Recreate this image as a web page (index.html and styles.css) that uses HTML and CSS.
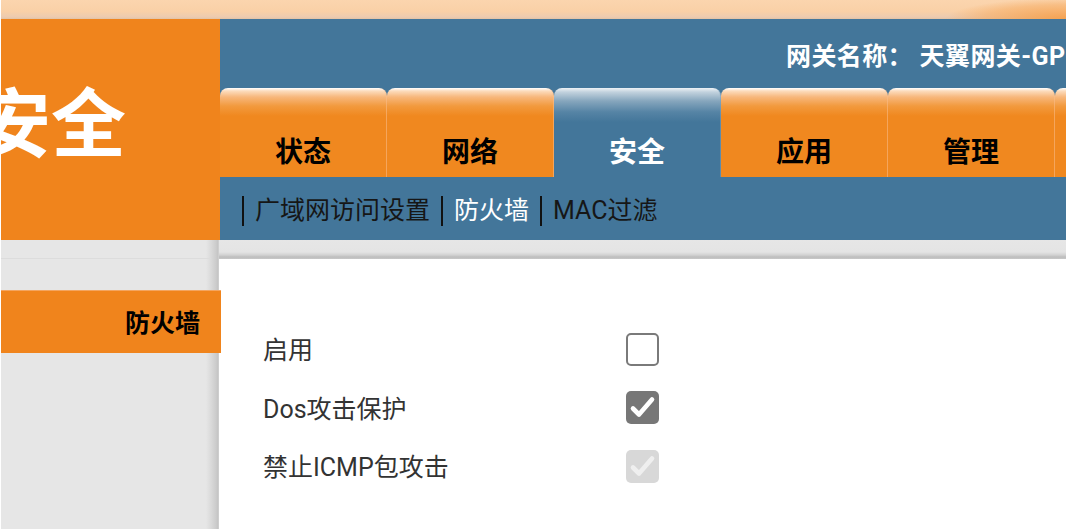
FILE: index.html
```html
<!DOCTYPE html>
<html lang="zh-CN">
<head>
<meta charset="utf-8">
<title>安全 - 防火墙</title>
<link rel="stylesheet" href="styles.css">
</head>
<body>
<div class="page">
  <div class="topband"></div>
  <div class="header">
    <div class="brand"><span class="brand-text">安全</span></div>
    <div class="headmain">
      <div class="gateway">网关名称：&nbsp;天翼网关-GPON</div>
      <div class="tabs">
        <div class="tab">状态</div>
        <div class="tab">网络</div>
        <div class="tab active">安全</div>
        <div class="tab">应用</div>
        <div class="tab">管理</div>
        <div class="tab">帮助</div>
      </div>
      <div class="subnav">
        <span class="sep"></span>
        <span class="sublink">广域网访问设置</span>
        <span class="sep"></span>
        <span class="sublink current">防火墙</span>
        <span class="sep"></span>
        <span class="sublink">MAC过滤</span>
      </div>
    </div>
  </div>
  <div class="body">
    <div class="sidebar">
      <div class="side-item">防火墙</div>
    </div>
    <div class="main">
      <div class="shadowbar"></div>
      <div class="content">
        <div class="row">
          <span class="label">启用</span>
          <span class="cb"></span>
        </div>
        <div class="row">
          <span class="label">Dos攻击保护</span>
          <span class="cb checked"><svg viewBox="0 0 33 33" width="33" height="33"><path d="M7 17.5 L13 23.5 L26 8.5" fill="none" stroke="#fff" stroke-width="4.6" stroke-linecap="round" stroke-linejoin="round"/></svg></span>
        </div>
        <div class="row">
          <span class="label">禁止ICMP包攻击</span>
          <span class="cb disabled"><svg viewBox="0 0 33 33" width="33" height="33"><path d="M7 17.5 L13 23.5 L26 8.5" fill="none" stroke="#efefef" stroke-width="4.6" stroke-linecap="round" stroke-linejoin="round"/></svg></span>
        </div>
      </div>
    </div>
  </div>
</div>
</body>
</html>
```
FILE: styles.css
```css
html, body {
  margin: 0;
  padding: 0;
  background: #fff;
  overflow: hidden;
}
body {
  font-family: Roboto, "Noto Sans CJK SC", sans-serif;
  width: 1066px;
  height: 529px;
}
.page {
  margin-left: 1px;
  width: 1065px;
  height: 529px;
  overflow: hidden;
}
.topband {
  height: 19px;
  margin-left: -1px;
  background:
    radial-gradient(ellipse 150px 26px at 100% 100%, rgba(246,160,76,0.95), rgba(246,170,95,0.5) 55%, rgba(246,170,95,0) 80%),
    linear-gradient(to bottom, #fbd5ae 0%, #f9d0a7 60%, #eccbb0 90%, #e2c2a4 100%);
}
.header {
  display: flex;
  height: 221px;
}
.brand {
  width: 219px;
  flex: none;
  background: #f0841c;
  display: flex;
  align-items: center;
  overflow: hidden;
}
.brand-text {
  color: #fff;
  font-weight: 700;
  font-size: 75px;
  line-height: 1;
  margin-left: -25px;
  margin-top: -8px;
  white-space: nowrap;
}
.headmain {
  flex: 1;
  min-width: 0;
  background: #43769a;
  display: flex;
  flex-direction: column;
  overflow: hidden;
}
.gateway {
  height: 69px;
  display: flex;
  align-items: center;
  padding-left: 566px;
  color: #fff;
  font-weight: 700;
  font-size: 25px;
  letter-spacing: 0.4px;
  white-space: nowrap;
}
.tabs {
  height: 89px;
  display: flex;
}
.tab {
  width: 167px;
  flex: none;
  box-sizing: border-box;
  border-radius: 8px 8px 0 0;
  border-right: 1px solid rgba(250,190,140,0.55);
  background: linear-gradient(to bottom, #ffffff 0px, #fcdcbd 3px, #f7b77c 9px, #f29a3e 18px, #f0881f 28px, #f0881f 100%);
  color: #000;
  font-weight: 700;
  font-size: 28px;
  line-height: 30px;
  padding-top: 50px;
  text-align: center;
}
.tab.active {
  background: linear-gradient(to bottom, #eef2f5 0px, #c2d2de 4px, #86a6bd 13px, #5684a5 24px, #43769a 34px, #43769a 100%);
  color: #fff;
  border-right-color: rgba(120,160,190,0.5);
}
.subnav {
  height: 63px;
  display: flex;
  align-items: center;
  padding-left: 22px;
  padding-bottom: 1px;
  box-sizing: border-box;
  gap: 11px;
  color: #161616;
  font-size: 25px;
  white-space: nowrap;
}
.sep {
  width: 2px;
  height: 30px;
  margin-top: 6px;
  background: #111;
  flex: none;
}
.sublink.current {
  color: #fff;
}
.body {
  display: flex;
  height: 289px;
}
.sidebar {
  width: 218px;
  flex: none;
  background: linear-gradient(to right, #e6e6e6 0px, #e6e6e6 205px, #dadada 210px, #cccccc 215px, #c4c4c4 217px, #d8d8d8 218px);
  padding-top: 50px;
  box-sizing: border-box;
  position: relative;
  z-index: 1;
}
.sidebar::before {
  content: "";
  display: block;
  height: 1px;
  margin-top: -32px;
  margin-bottom: 31px;
  background: #dcdcdc;
  width: 210px;
}
.side-item {
  width: 220px;
  height: 63px;
  box-sizing: border-box;
  background: #f0841c;
  border-top: 1px solid #f4a560;
  color: #000;
  font-weight: 700;
  font-size: 25px;
  display: flex;
  align-items: center;
  justify-content: flex-end;
  padding-right: 21px;
  padding-bottom: 3px;
}
.main {
  flex: 1;
  min-width: 0;
  display: flex;
  flex-direction: column;
}
.shadowbar {
  height: 19px;
  margin-left: -8px;
  background: linear-gradient(to bottom, #e6e6e6 0px, #e4e4e4 12px, #d2d2d2 15px, #bdbdbd 17px, #c8c8c8 19px);
  flex: none;
}
.content {
  padding: 61px 0 0 44px;
}
.row {
  display: flex;
  align-items: center;
  height: 58.5px;
}
.label {
  width: 363px;
  flex: none;
  font-size: 25px;
  color: #333;
  padding-bottom: 2px;
}
.cb {
  width: 33px;
  height: 33px;
  box-sizing: border-box;
  border-radius: 5px;
  border: 2px solid #7a7a7a;
  background: #fff;
  display: block;
  flex: none;
}
.cb svg {
  display: block;
}
.cb.checked {
  border: none;
  background: #777;
}
.cb.disabled {
  border: none;
  background: #d8d8d8;
}
```
